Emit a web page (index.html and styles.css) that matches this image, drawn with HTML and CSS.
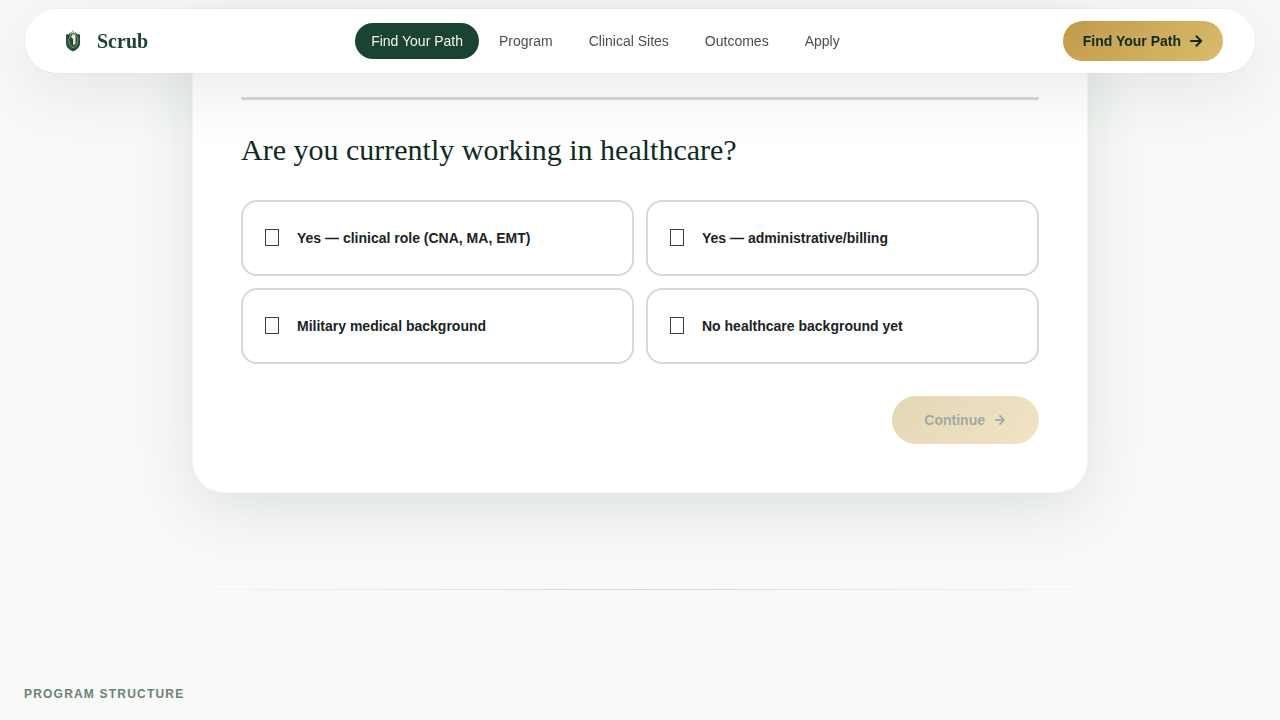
FILE: index.html
```html
<!DOCTYPE html>
<html lang="en">
<head>
    <meta charset="UTF-8">
    <meta name="viewport" content="width=device-width, initial-scale=1.0">
    <title>Scrub</title>
    <link rel="stylesheet" href="styles.css">
</head>
<body>
    <header class="site-header">
        <div class="navbar">
            <a href="#" class="brand">
                <svg class="brand-logo" viewBox="0 0 32 32" aria-hidden="true">
                    <path d="M9 9.500 Q12 9.500 13 8 H19 Q20 9.500 23 9.500 V19 Q22.500 24 16 26.500 Q9.500 24 9 19 Z" fill="#24503b"/>
                    <path d="M13.500 11q-3 3-1.500 7t4 4.500q3.500-.5 4.500-4.500t-1-7" fill="none" stroke="#7f9670" stroke-width="1"/>
                    <path d="M15.500 9.500q2.500-1 3 1v8.500l-2.500 1v-6l-2-2z" fill="#e9e6d0"/>
                    <path d="M13 11l1-3.500 1.500 2M16 9V5.500M18.500 10.500V7" fill="none" stroke="#8a9878" stroke-width="1.200"/>
                    <path d="M15.500 14v6" stroke="#1f3d2c" stroke-width="1"/>
                </svg>
                <span class="brand-name">Scrub</span>
            </a>
            <nav class="nav-links">
                <a href="#quiz" class="nav-link active">Find Your Path</a>
                <a href="#program" class="nav-link">Program</a>
                <a href="#sites" class="nav-link">Clinical Sites</a>
                <a href="#outcomes" class="nav-link">Outcomes</a>
                <a href="#apply" class="nav-link">Apply</a>
            </nav>
            <a href="#quiz" class="btn btn-nav">
                Find Your Path
                <svg class="arrow" viewBox="0 0 14 14" aria-hidden="true">
                    <path d="M2 7h10M7.500 2.300l4.700 4.700-4.700 4.700"/>
                </svg>
            </a>
        </div>
    </header>

    <main>
        <section class="quiz" id="quiz">
            <form class="quiz-card">
                <div class="progress"></div>
                <h2 class="question">Are you currently working in healthcare?</h2>
                <div class="options">
                    <button type="button" class="option">
                        <span class="option-icon"></span>
                        <span>Yes — clinical role (CNA, MA, EMT)</span>
                    </button>
                    <button type="button" class="option">
                        <span class="option-icon"></span>
                        <span>Yes — administrative/billing</span>
                    </button>
                    <button type="button" class="option">
                        <span class="option-icon"></span>
                        <span>Military medical background</span>
                    </button>
                    <button type="button" class="option">
                        <span class="option-icon"></span>
                        <span>No healthcare background yet</span>
                    </button>
                </div>
                <div class="quiz-actions">
                    <button type="submit" class="btn btn-continue" disabled>
                        Continue
                        <svg class="arrow" viewBox="0 0 24 24" aria-hidden="true">
                            <path d="M5 12h14M12 5l7 7-7 7" stroke-width="3"/>
                        </svg>
                    </button>
                </div>
            </form>
        </section>

        <div class="divider"></div>

        <section class="program" id="program">
            <p class="eyebrow">Program Structure</p>
        </section>
    </main>
</body>
</html>
```

FILE: styles.css
```css
:root {
    --green: #1b4332;
    --green-dark: #0f2b1f;
    --gold-gradient: linear-gradient(135deg, #c19a4b, #d9bc6a);
    --line: #d5d9d7;
}

* {
    box-sizing: border-box;
}

body {
    margin: 0;
    font-family: "Liberation Sans", Arial, sans-serif;
    font-size: 14px;
    line-height: 20px;
    background-color: #f8faf7;
    color: #1a241f;
}

a {
    text-decoration: none;
}

/* Header */
.site-header {
    position: fixed;
    top: 8px;
    left: 0;
    right: 0;
    z-index: 10;
    padding: 0 24px;
}

.navbar {
    display: flex;
    align-items: center;
    justify-content: space-between;
    padding: 12px 32px;
    background: white;
    background-clip: padding-box;
    border: 1px solid rgba(27, 67, 50, 0.03);
    border-radius: 40px;
    box-shadow: 0 16px 64px rgba(27, 50, 40, 0.1);
}

.brand {
    display: flex;
    align-items: center;
    gap: 8px;
}

.brand-logo {
    width: 32px;
    height: 32px;
}

.brand-name {
    font-family: "Liberation Serif", "Times New Roman", serif;
    font-size: 20px;
    font-weight: 700;
    color: var(--green);
}

.nav-links {
    display: flex;
    gap: 4px;
}

.nav-link {
    padding: 8px 16px;
    border-radius: 18px;
    color: #4a504d;
}

.nav-link.active {
    background: var(--green);
    color: #f1f7f0;
}

/* Buttons */
.btn {
    display: inline-flex;
    align-items: center;
    gap: 8px;
    border: none;
    border-radius: 24px;
    font: inherit;
    font-weight: 700;
    background: var(--gold-gradient);
    color: var(--green-dark);
    cursor: pointer;
}

.btn-nav {
    padding: 10px 20px;
}

.btn-continue {
    padding: 14px 32px;
}

.btn:disabled {
    opacity: 0.4;
    cursor: not-allowed;
}

.arrow {
    width: 14px;
    height: 14px;
    fill: none;
    stroke: currentColor;
    stroke-width: 2;
    stroke-linecap: round;
    stroke-linejoin: round;
}

/* Quiz */
.quiz {
    padding: 16px 24px 96px;
}

.quiz-card {
    max-width: 896px;
    margin: 0 auto;
    padding: 80px 48px 48px;
    background: white;
    border: 1px solid rgba(27, 67, 50, 0.04);
    border-radius: 32px;
    box-shadow: 0 16px 64px rgba(27, 50, 40, 0.12);
}

.progress {
    height: 3px;
    margin-bottom: 32px;
    border-radius: 2px;
    background: var(--line);
}

.question {
    margin: 0 0 32px;
    font-family: "Liberation Serif", "Times New Roman", serif;
    font-size: 30px;
    font-weight: 400;
    line-height: 36px;
    color: var(--green-dark);
}

.options {
    display: grid;
    grid-template-columns: 1fr 1fr;
    gap: 12px;
}

.option {
    display: flex;
    align-items: center;
    gap: 16px;
    min-height: 76px;
    padding: 20px;
    border: 2px solid var(--line);
    border-radius: 16px;
    background: white;
    font: inherit;
    font-weight: 700;
    color: inherit;
    text-align: left;
    cursor: pointer;
}

.option-icon {
    width: 14px;
    height: 17px;
    margin: 0 2px 2px;
    border: 1px solid #3a423e;
}

.quiz-actions {
    display: flex;
    justify-content: flex-end;
    margin-top: 32px;
}

/* Program */
.divider {
    height: 1px;
    margin: 0 128px;
    background: linear-gradient(90deg, transparent, var(--line), transparent);
}

.program {
    padding: 96px 24px 0;
}

.eyebrow {
    margin: 0;
    font-size: 12px;
    font-weight: 700;
    line-height: 16px;
    letter-spacing: 0.1em;
    text-transform: uppercase;
    color: #6b8276;
}
```
